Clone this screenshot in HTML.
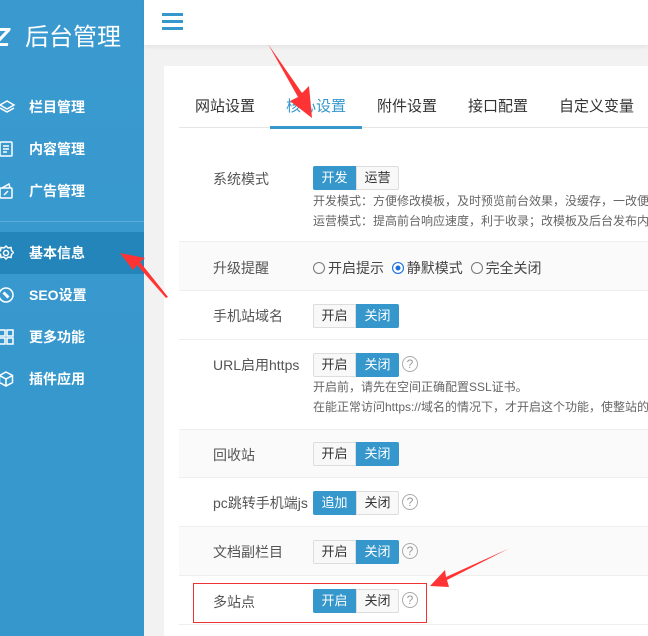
<!DOCTYPE html>
<html><head><meta charset="utf-8"><style>
*{margin:0;padding:0;box-sizing:border-box}
body{width:648px;height:636px;overflow:hidden;background:#f2f2f2;font-family:"Liberation Sans","Noto Sans CJK SC",sans-serif;position:relative}
.side{position:absolute;left:0;top:0;width:144px;height:636px;background:linear-gradient(#3a9ad0,#3597cc)}
.logo{position:absolute;left:0;top:20px;color:#fff;font-size:26px;line-height:34px;white-space:nowrap}
.nav{position:absolute;left:0;width:144px;height:42px;color:#fff;font-size:14px;font-weight:bold;line-height:42px;padding-left:29px}
.nav svg{position:absolute;left:-2px;top:13px}
.act{background:#2385ba}
.sep{position:absolute;left:0;top:221px;width:144px;height:1px;background:#5aaddb}
.head{position:absolute;left:144px;top:0;width:504px;height:45px;background:#fff;box-shadow:0 2px 4px rgba(0,0,0,.06)}
.burger{position:absolute;left:18px;top:13px;width:21px}
.burger i{display:block;height:3px;background:#3597cc;margin-bottom:4px}
.card{position:absolute;left:164px;top:66px;width:484px;height:570px;background:#fff}
.tabs{position:absolute;left:179px;top:92px;width:469px;height:36px;border-bottom:1px solid #e6e6e6;font-size:15px;color:#333}
.tabs span{position:absolute;top:3px}
.tabs .on{color:#3597cc}
.ul{position:absolute;left:270px;top:126px;width:92px;height:3px;background:#3597cc}
.row{position:absolute;left:179px;width:469px;border-bottom:1px solid #eee}
.g{background:#fafafa}
.lb{position:absolute;left:34px;font-size:14px;color:#555}
.bt{position:absolute;left:134px;height:24px;display:flex;font-size:13px}
.bt b{font-weight:normal;width:43px;height:24px;line-height:22px;text-align:center;border:1px solid #ddd;background:#f8f8f8;color:#333}
.bt b:first-child{border-radius:2px 0 0 2px}.bt b:last-child{border-radius:0 2px 2px 0}
.bt b.s{background:#3597cc;border-color:#3597cc;color:#fff}
.q{position:absolute;width:16px;height:16px;border:1.3px solid #aaa;border-radius:50%;color:#999;font-size:12px;line-height:14px;text-align:center}
.note{position:absolute;left:134px;font-size:12px;color:#666;white-space:nowrap;line-height:20px}
.rad{position:absolute;left:134px;font-size:14px;color:#444;white-space:nowrap}
.rad i{display:inline-block;width:12px;height:12px;border:1px solid #777;border-radius:50%;vertical-align:-1px;margin-right:3px}
.rad i.c{border-color:#1a6fe0;box-shadow:inset 0 0 0 2.5px #fff;background:#1a6fe0}
</style></head><body>
<div class="side">
<div class="logo"><span style="font-weight:bold;font-style:italic;margin-left:-6px">Z</span><span style="position:absolute;left:25px;top:1px;font-size:24px">后台管理</span></div>
<div class="nav" style="top:86px"><svg width="18" height="16" viewBox="0 0 18 16" fill="none" stroke="#fff" stroke-width="1.5"><path d="M9 2l7 4-7 4-7-4z"/><path d="M2 9l7 4 7-4"/></svg>栏目管理</div>
<div class="nav" style="top:128px"><svg width="16" height="16" viewBox="0 0 16 16" fill="none" stroke="#fff" stroke-width="1.5"><rect x="2" y="1" width="12" height="14" rx="1"/><path d="M5 5h6M5 8h6M5 11h4"/></svg>内容管理</div>
<div class="nav" style="top:170px"><svg width="16" height="16" viewBox="0 0 16 16" fill="none" stroke="#fff" stroke-width="1.5"><rect x="2" y="5" width="12" height="10" rx="1"/><path d="M4 5l7-4 1 4M6 12l4-4"/></svg>广告管理</div>
<div class="sep"></div>
<div class="nav act" style="top:232px"><svg width="16" height="16" viewBox="0 0 16 16" fill="none" stroke="#fff" stroke-width="1.5"><circle cx="8" cy="8" r="2.5"/><path d="M8 1l2 2 3-0.5 0.5 3 2 2-2 2-0.5 3-3-0.5-2 2-2-2-3 0.5-0.5-3-2-2 2-2 0.5-3 3 0.5z"/></svg>基本信息</div>
<div class="nav" style="top:274px"><svg width="16" height="16" viewBox="0 0 16 16" fill="none" stroke="#fff" stroke-width="1.5"><circle cx="8" cy="8" r="7"/><path d="M5 6l5 5M6 5l5 5"/></svg>SEO设置</div>
<div class="nav" style="top:316px"><svg width="16" height="16" viewBox="0 0 16 16" fill="none" stroke="#fff" stroke-width="1.5"><rect x="1" y="1" width="6" height="6"/><rect x="9" y="1" width="6" height="6"/><rect x="1" y="9" width="6" height="6"/><rect x="9" y="9" width="6" height="6"/></svg>更多功能</div>
<div class="nav" style="top:358px"><svg width="16" height="16" viewBox="0 0 16 16" fill="none" stroke="#fff" stroke-width="1.5"><path d="M8 1l6.5 3.5v7L8 15l-6.5-3.5v-7z"/><path d="M1.5 4.5L8 8l6.5-3.5M8 8v7"/></svg>插件应用</div>
</div>
<div class="head"><div class="burger"><i></i><i></i><i></i></div></div>
<div class="card"></div>
<div class="tabs"><span style="left:16px">网站设置</span><span class="on" style="left:107px">核心设置</span><span style="left:198px">附件设置</span><span style="left:289px">接口配置</span><span style="left:380px">自定义变量</span></div>
<div class="ul"></div>

<div class="row" style="top:150px;height:92px"><div class="lb" style="top:19px">系统模式</div><div class="bt" style="top:16px"><b class="s">开发</b><b>运营</b></div>
<div class="note" style="top:41px">开发模式：方便修改模板，及时预览前台效果，没缓存，一改便<br>运营模式：提高前台响应速度，利于收录；改模板及后台发布内</div></div>
<div class="row g" style="top:242px;height:49px"><div class="lb" style="top:16px">升级提醒</div><div class="rad" style="top:16px"><i></i>开启提示&nbsp; <i class="c"></i>静默模式&nbsp; <i></i>完全关闭</div></div>
<div class="row" style="top:291px;height:49px"><div class="lb" style="top:15px">手机站域名</div><div class="bt" style="top:13px"><b>开启</b><b class="s">关闭</b></div></div>
<div class="row" style="top:340px;height:90px"><div class="lb" style="top:15px">URL启用https</div><div class="bt" style="top:13px"><b>开启</b><b class="s">关闭</b></div><div class="q" style="left:223px;top:16px">?</div>
<div class="note" style="top:37px">开启前，请先在空间正确配置SSL证书。<br>在能正常访问https://域名的情况下，才开启这个功能，使整站的</div></div>
<div class="row g" style="top:430px;height:48px"><div class="lb" style="top:15px">回收站</div><div class="bt" style="top:12px"><b>开启</b><b class="s">关闭</b></div></div>
<div class="row" style="top:478px;height:49px"><div class="lb" style="top:15px">pc跳转手机端js</div><div class="bt" style="top:13px"><b class="s">追加</b><b>关闭</b></div><div class="q" style="left:223px;top:16px">?</div></div>
<div class="row g" style="top:527px;height:49px"><div class="lb" style="top:15px">文档副栏目</div><div class="bt" style="top:13px"><b>开启</b><b class="s">关闭</b></div><div class="q" style="left:223px;top:16px">?</div></div>
<div class="row" style="top:576px;height:49px"><div class="lb" style="top:16px">多站点</div><div class="bt" style="top:13px"><b class="s">开启</b><b>关闭</b></div><div class="q" style="left:223px;top:16px">?</div></div>
<div style="position:absolute;left:193px;top:583px;width:234px;height:40px;border:1px solid #e33"></div>

<svg style="position:absolute;left:0;top:0" width="648" height="636">
<polygon points="268,44 302,93 309,86 312,118 290,101 298,97" fill="#f33"/>
<polygon points="120,253 145,258 140,262 168,297 166,298 137,265 133,270" fill="#f33"/>
<polygon points="430,586 445,570 446,577 510,548 447,580 449,587" fill="#f33"/>
</svg>
</body></html>
